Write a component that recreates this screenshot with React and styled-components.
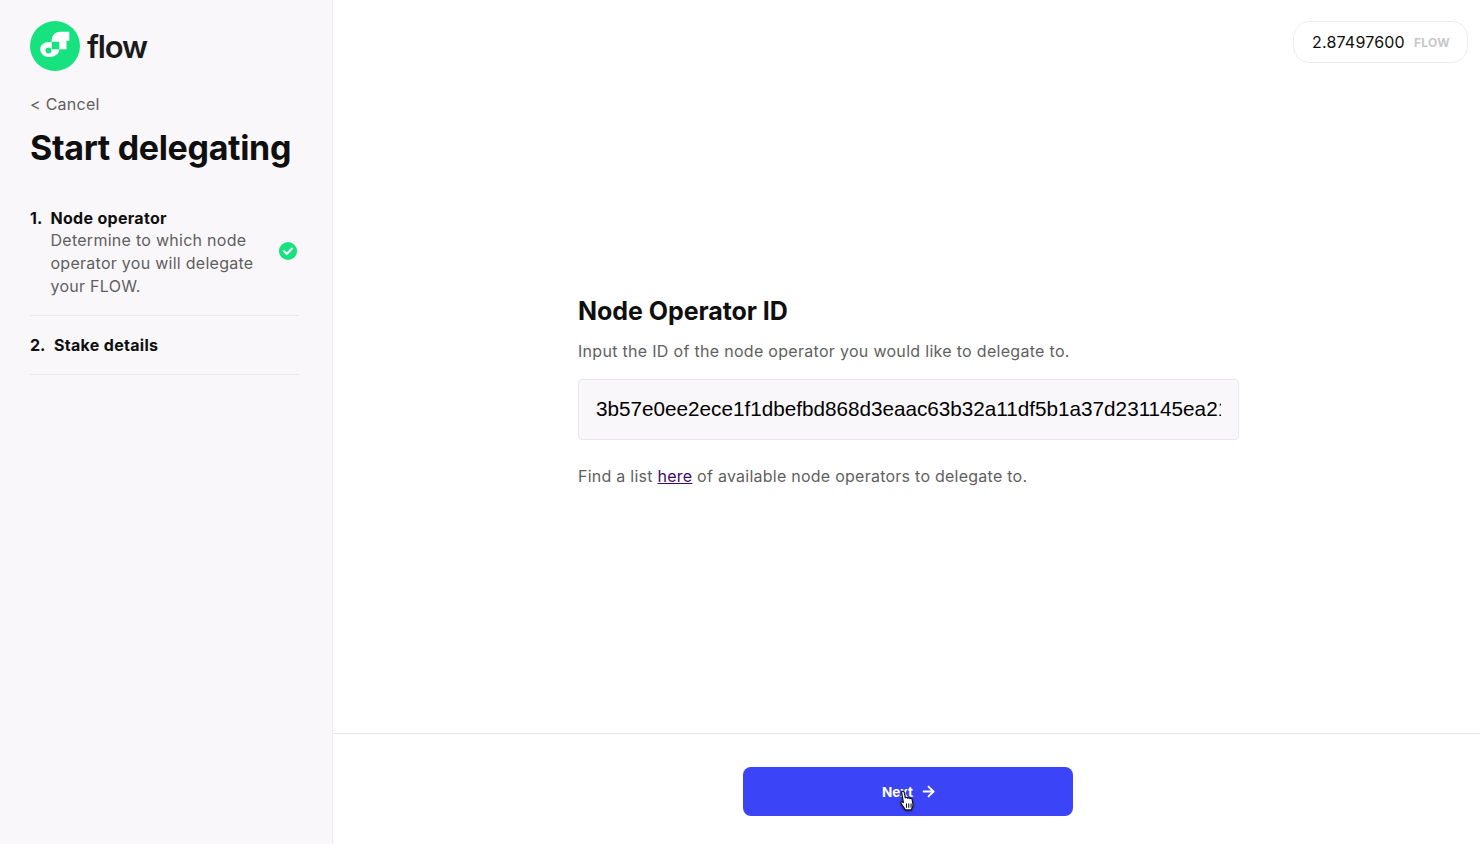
import React from "react";
import styled, { createGlobalStyle } from "styled-components";
import { ArrowRight } from "lucide-react";

const GlobalStyle = createGlobalStyle`
    html, body {
        margin: 0;
        padding: 0;
        height: 100%;
        background: #ffffff;
        font-family: Inter, "Liberation Sans", sans-serif;
    }
    * {
        box-sizing: border-box;
    }
`

const Page = styled.div`
    display: flex;
    width: 100%;
    height: 100vh;
    overflow: hidden;
`

const Sidebar = styled.aside`
    display: flex;
    flex-direction: column;
    flex: 0 0 333px;
    padding: 21px 33px 0 30px;
    background: #f9f7fa;
    border-right: 1px solid #ececec;
`

const LogoRow = styled.div`
    display: flex;
    align-items: center;
    gap: 7px;
    height: 50px;
`

const LogoText = styled.span`
    padding-top: 1px;
    font-size: 31px;
    font-weight: 600;
    letter-spacing: -1.2px;
    color: #1a1a1a;
`

const Cancel = styled.a`
    margin-top: 23px;
    font-size: 16px;
    line-height: 20px;
    letter-spacing: 0.27px;
    color: #5f5f5f;
`

const Title = styled.h1`
    margin: 12px 0 0;
    font-size: 34px;
    line-height: 44px;
    font-weight: 700;
    letter-spacing: -0.33px;
    color: #0f0f0f;
`

const Steps = styled.ol`
    margin: 37px 0 0;
    padding: 0;
    list-style: none;
`

const Step = styled.li`
    display: flex;
    align-items: ${(props) => (props.$active ? "flex-start" : "center")};
    padding-top: ${(props) => (props.$active ? "0" : "18px")};
    padding-bottom: ${(props) => (props.$active ? "17px" : "18px")};
    border-bottom: 1px solid #e9e9ec;
`

const StepNumber = styled.span`
    flex: none;
    width: ${(props) => (props.$wide ? "24px" : "20.5px")};
    font-size: 16px;
    line-height: 22px;
    font-weight: 700;
    color: #0f0f0f;
`

const StepBody = styled.div`
    flex: 1;
`

const StepTitle = styled.div`
    font-size: 16px;
    line-height: 22px;
    font-weight: 700;
    letter-spacing: 0.3px;
    color: #0f0f0f;
`

const StepText = styled.div`
    width: 218px;
    font-size: 16px;
    line-height: 23px;
    letter-spacing: 0.27px;
    color: #5f5f5f;
`

const CheckMark = styled.svg`
    flex: none;
    align-self: center;
    width: 18px;
    height: 18px;
    margin: 0 2px 3px 0;
`

const Main = styled.main`
    position: relative;
    display: flex;
    flex-direction: column;
    flex: 1;
    min-width: 0;
`

const TopBar = styled.div`
    display: flex;
    justify-content: flex-end;
    padding: 21px 12px 0 0;
`

const Balance = styled.div`
    display: flex;
    align-items: center;
    gap: 9px;
    height: 42px;
    padding: 0 17px 0 18px;
    border: 1px solid #ececec;
    border-radius: 16px;
    background: #ffffff;
`

const BalanceValue = styled.span`
    font-size: 16px;
    letter-spacing: 0.2px;
    color: #0f0f0f;
`

const BalanceUnit = styled.span`
    font-size: 12px;
    font-weight: 700;
    letter-spacing: 0.3px;
    color: #c8c8c8;
`

const Content = styled.section`
    flex: 1;
    display: flex;
    flex-direction: column;
    width: 661px;
    margin-left: 245px;
    padding-top: 230px;
`

const Heading = styled.h2`
    margin: 0;
    font-size: 25px;
    line-height: 36px;
    font-weight: 700;
    letter-spacing: -0.05px;
    color: #0f0f0f;
`

const Hint = styled.p`
    margin: 10px 0 0;
    font-size: 16px;
    line-height: 24px;
    letter-spacing: 0.3px;
    color: #5f5f5f;
`

const IdInput = styled.input`
    width: 100%;
    height: 61px;
    margin-top: 16px;
    padding: 0 17px 2px;
    border: 1px solid #e8e8ec;
    border-radius: 4px;
    background: #f9f7fa;
    font-family: "Liberation Sans", Arial, sans-serif;
    font-size: 20.7px;
    color: #000000;
    outline: none;
`

const Note = styled.p`
    margin: 24px 0 0;
    font-size: 16px;
    line-height: 24px;
    letter-spacing: 0.25px;
    color: #5f5f5f;
`

const NoteLink = styled.a`
    color: #3c096c;
    text-decoration: underline;
`

const Footer = styled.footer`
    display: flex;
    justify-content: center;
    flex: 0 0 111px;
    padding: 33px 0 0 2px;
    border-top: 1px solid #e6e6e6;
`

const NextButton = styled.button`
    position: relative;
    display: flex;
    align-items: center;
    justify-content: center;
    gap: 7px;
    width: 330px;
    height: 49px;
    padding: 0 0 0 4px;
    border: none;
    border-radius: 8px;
    background: #3b44f6;
    color: #ffffff;
    font-family: Inter, sans-serif;
    font-size: 13.5px;
    font-weight: 700;
`

const Cursor = styled.svg`
    position: absolute;
    left: 155px;
    top: 23px;
    width: 18px;
    height: 22px;
    filter: drop-shadow(0 1px 1px rgba(0, 0, 0, 0.45));
`

const FlowLogo = () => (
    <svg width="50" height="50" viewBox="0 0 50 50">
        <circle cx="25" cy="25" r="25" fill="#16e27f" />
        <path
            d="M39.300 10.700V19.700H36.500V28.300H29.300C29.300 33 25 36 19 36C14 36 10.200 32.500 10.200 28C10.200 23.500 14.500 20.700 21.700 20.700V19.500C21.700 14.500 25 10.700 30 10.700Z"
            fill="#ffffff"
        />
        <rect x="21.700" y="20.700" width="7.600" height="7.600" fill="#16e27f" />
        <circle cx="18.500" cy="29.500" r="3" fill="#16e27f" />
    </svg>
)

const App = () => {
    return (
        <Page>
            <GlobalStyle />
            <Sidebar>
                <LogoRow>
                    <FlowLogo />
                    <LogoText>flow</LogoText>
                </LogoRow>
                <Cancel>&lt; Cancel</Cancel>
                <Title>Start delegating</Title>
                <Steps>
                    <Step $active>
                        <StepNumber>1.</StepNumber>
                        <StepBody>
                            <StepTitle>Node operator</StepTitle>
                            <StepText>Determine to which node operator you will delegate your FLOW.</StepText>
                        </StepBody>
                        <CheckMark viewBox="0 0 18 18">
                            <circle cx="9" cy="9" r="9" fill="#16e27f" />
                            <path d="M5 9.300l2.800 2.700L13 6.500" fill="none" stroke="#ffffff" strokeWidth="2" strokeLinecap="round" strokeLinejoin="round" />
                        </CheckMark>
                    </Step>
                    <Step>
                        <StepNumber $wide>2.</StepNumber>
                        <StepTitle>Stake details</StepTitle>
                    </Step>
                </Steps>
            </Sidebar>
            <Main>
                <TopBar>
                    <Balance>
                        <BalanceValue>2.87497600</BalanceValue>
                        <BalanceUnit>FLOW</BalanceUnit>
                    </Balance>
                </TopBar>
                <Content>
                    <Heading>Node Operator ID</Heading>
                    <Hint>Input the ID of the node operator you would like to delegate to.</Hint>
                    <IdInput readOnly value="3b57e0ee2ece1f1dbefbd868d3eaac63b32a11df5b1a37d231145ea21d60e1f4" />
                    <Note>
                        Find a list <NoteLink href="#">here</NoteLink> of available node operators to delegate to.
                    </Note>
                </Content>
                <Footer>
                    <NextButton type="button">
                        Next
                        <ArrowRight size={17} strokeWidth={2.5} />
                        <Cursor viewBox="0 0 16 21">
                            <path
                                d="M3 1.500c1-.800 2.200 0 2.400 1l1 5c.8-.6 1.800-.5 2.300.3.700-.5 1.700-.3 2.200.4.800-.4 1.700 0 2 .900l.8 4.400c.3 2-.600 3.700-1.800 5.500H6.500L2.300 12.800c-.600-.900.200-2 1.300-1.500l1 .8L3 3c-.1-.600-.300-1.100 0-1.500z"
                                fill="#ffffff"
                                stroke="#111111"
                                strokeWidth="1.100"
                                strokeLinejoin="round"
                            />
                            <path d="M7.500 13v4M9.700 13v4M11.900 13v4" stroke="#111111" strokeWidth="1" />
                        </Cursor>
                    </NextButton>
                </Footer>
            </Main>
        </Page>
    )
}

export default App;
